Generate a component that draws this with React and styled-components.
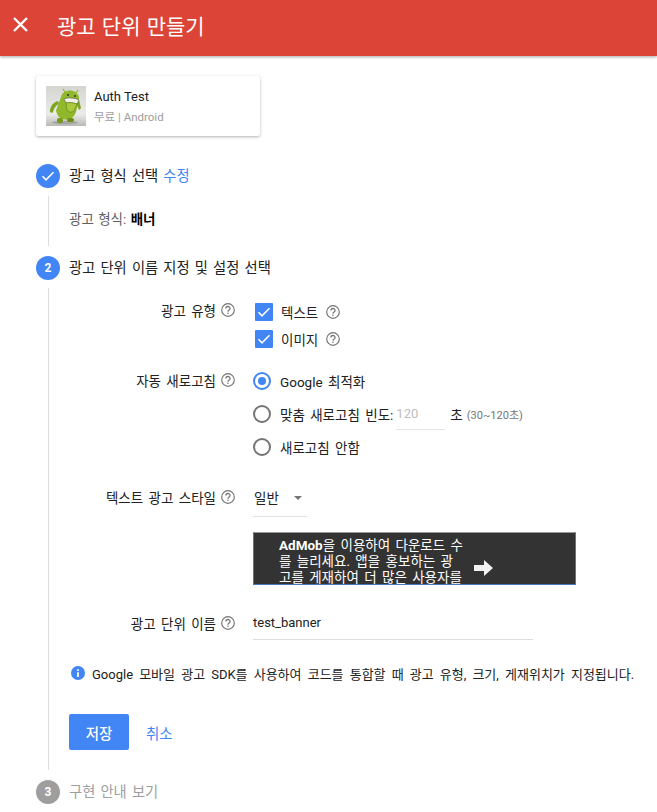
import React from "react";
import styled, { createGlobalStyle } from "styled-components";

const Global = createGlobalStyle`
  html, body { margin: 0; padding: 0; background: #fff; }
  body { font-family: Roboto, "Noto Sans CJK KR", sans-serif; color: #212121; width: 657px; height: 812px; overflow: hidden; }
  * { box-sizing: border-box; }
`;

const Page = styled.div`display: flex; flex-direction: column; width: 657px; height: 812px; overflow: hidden;`;
const Header = styled.header`
  height: 56px; background: #db4437; display: flex; align-items: center; padding-left: 12px; gap: 28px;
  box-shadow: 0 1px 3px rgba(0,0,0,.35); flex: none;
`;
const CloseIcon = styled.svg`width: 17px; height: 17px; margin-bottom: 8px; flex: none;`;
const Title = styled.h1`margin: 0; font-size: 21px; word-spacing: 1px; font-weight: 400; color: #fff; line-height: 24px; position: relative; top: -1px;`;
const Content = styled.main`padding: 20px 0 0 36px; display: flex; flex-direction: column; align-items: flex-start;`;

const AppCard = styled.div`
  width: 224px; height: 60px; background: #fff; border-radius: 2px; padding: 10px;
  box-shadow: 0 1px 3px rgba(0,0,0,.3); display: flex; gap: 8px; align-items: flex-start;
`;
const Thumb = styled.svg`width: 40px; height: 40px; display: block; flex: none;`;
const AppInfo = styled.div`display: flex; flex-direction: column; gap: 2px; padding-top: 1px;`;
const AppName = styled.div`font-size: 13px; line-height: 20px; color: #212121;`;
const AppMeta = styled.div`font-size: 11.5px; line-height: 16px; color: #9e9e9e;`;

const StepHead = styled.div`display: flex; align-items: center; gap: 9px; height: 24px; margin-top: ${p => p.$mt}px;`;
const Circle = styled.div`
  width: 24px; height: 24px; border-radius: 50%; background: ${p => p.$muted ? "#9e9e9e" : "#4285f4"}; color: #fff;
  display: flex; align-items: center; justify-content: center; font-size: 12px; font-weight: 700; flex: none;
`;
const StepTitle = styled.div`font-size: 14.3px; word-spacing: 1.6px; line-height: 24px; color: ${p => p.$muted ? "#9e9e9e" : "#212121"};`;
const EditLink = styled.span`color: #4285f4;`;

const Rail = styled.div`margin: ${p => p.$mt}px 0 0 12px; border-left: 1px solid #ddd; height: ${p => p.$h}px; padding-left: 20px; width: 610px;`;
const FormatLine = styled.div`font-size: 13.5px; word-spacing: 1px; line-height: 20px; padding-top: 13px; color: #616161;`;
const Strong = styled.strong`color: #000; font-weight: 700;`;

const Row = styled.div`display: grid; grid-template-columns: 166px 1fr; column-gap: 18px; margin-top: ${p => p.$mt || 0}px; align-items: start;`;
const LabelCell = styled.div`display: flex; justify-content: flex-end; align-items: center; gap: 5px; height: 20px; font-size: 13.5px; word-spacing: 2px; color: #212121; margin-top: ${p => p.$mt || 0}px;`;
const Help = styled.svg`width: 14px; height: 14px; flex: none; display: block;`;
const Stack = styled.div`display: flex; flex-direction: column; gap: ${p => p.$gap}px;`;
const OptRow = styled.div`display: flex; align-items: center; height: 20px; font-size: 13.5px; word-spacing: 2px; color: #212121; white-space: nowrap;`;
const Check = styled.span`width: 18px; height: 18px; background: #4285f4; border-radius: 1px; display: flex; align-items: center; justify-content: center; margin: 0 8px 0 2px; flex: none;`;
const Radio = styled.span`
  width: 18px; height: 18px; border-radius: 50%; border: 2px solid ${p => p.$on ? "#4285f4" : "#757575"}; margin-right: 9px; flex: none;
  display: flex; align-items: center; justify-content: center;
  &::after { content: ""; width: 8px; height: 8px; border-radius: 50%; background: ${p => p.$on ? "#4285f4" : "transparent"}; }
`;
const NumInput = styled.div`width: 49px; height: 26px; border-bottom: 1px solid #e5e5e5; color: #bdbdbd; font-size: 13px; line-height: 20px; margin: 0 5px 0 3px; align-self: flex-start; flex: none;`;
const Hint = styled.span`color: #757575; font-size: 11px; margin-left: 4px;`;
const OptHelp = styled(Help)`margin-left: 8px;`;

const Select = styled.div`width: 54px; height: 30px; border-bottom: 1px solid #e0e0e0; display: flex; align-items: flex-start; justify-content: space-between; padding: 1px 5px 0 1px; font-size: 13.5px; line-height: 20px; color: #212121;`;
const Caret = styled.span`width: 0; height: 0; border-left: 4px solid transparent; border-right: 4px solid transparent; border-top: 4px solid #757575; margin-top: 8px;`;

const Ad = styled.div`
  width: 323px; height: 53px; background: #333; border: 1px solid #4a76c0; border-top-color: #999; overflow: hidden;
  display: flex; align-items: center; padding-left: 25px; margin-top: 15px;
`;
const AdText = styled.div`width: 186px; height: 51px; overflow: hidden; color: #fff; font-size: 13.5px; word-spacing: 2px; line-height: 16px; padding-top: 4px; flex: none;`;
const AdBrand = styled.span`font-weight: 700;`;
const AdArrow = styled.svg`width: 19px; height: 16px; margin: 19px 0 0 9px; flex: none;`;

const TextInput = styled.div`width: 280px; height: 27px; border-bottom: 1px solid #ddd; font-size: 13px; line-height: 20px; color: #212121;`;

const Notice = styled.div`display: flex; align-items: center; gap: 7px; height: 20px; margin-top: 23px; padding-left: 2px; font-size: 13px; word-spacing: 2.9px; color: #212121; white-space: nowrap;`;
const InfoIcon = styled.svg`width: 14px; height: 14px; flex: none;`;

const Actions = styled.div`display: flex; align-items: center; gap: 17px; margin-top: 31px;`;
const Primary = styled.button`width: 60px; height: 36px; background: #4285f4; color: #fff; border: 0; border-radius: 2px; font: 500 14.5px Roboto, "Noto Sans CJK KR", sans-serif;`;
const TextBtn = styled.span`font-size: 14.5px; color: #4285f4;`;

const HelpIcon = ({ as: C = Help }) => (
  <C viewBox="0 0 24 24" aria-hidden="true">
    <circle cx="12" cy="12" r="10.8" fill="none" stroke="#757575" strokeWidth="2" />
    <path d="M8.4 9.600a3.600 3.600 0 0 1 7.200 0c0 2.600-3.600 2.600-3.600 5.400" fill="none" stroke="#757575" strokeWidth="2.200" />
    <rect x="10.900" y="16.500" width="2.200" height="2.200" fill="#757575" />
  </C>
);
const Tick = () => (
  <svg width="14" height="14" viewBox="0 0 14 14"><path d="M1.500 7.300 5 10.800 12.500 3.200" fill="none" stroke="#fff" strokeWidth="1.600" /></svg>
);

export default function App() {
  return (
    <Page>
      <Global />
      <Header>
        <CloseIcon viewBox="0 0 17 17"><path d="M2 2l13 13M15 2 2 15" stroke="#fff" strokeWidth="2.400" /></CloseIcon>
        <Title>광고 단위 만들기</Title>
      </Header>
      <Content>
        <AppCard>
          <Thumb viewBox="0 0 40 40" aria-hidden="true">
            <defs>
              <linearGradient id="bg" x1="0" y1="0" x2="0" y2="1"><stop offset="0" stopColor="#d4d4d1" /><stop offset=".7" stopColor="#ebebe9" /><stop offset="1" stopColor="#b9b9b5" /></linearGradient>
            </defs>
            <rect width="40" height="40" fill="url(#bg)" />
            <ellipse cx="19" cy="36.500" rx="13" ry="1.800" fill="#8f8f8b" opacity=".6" />
            <path d="M15 11c1-5 6-7 10-6.500s9 4 8 9l-2 8c-1 8-5 12-11 12-6 0-9-4-10-9z" fill="#8fb82a" />
            <path d="M19 6l-2-3M30 7l2-3" stroke="#8fb82a" strokeWidth="1.200" />
            <path d="M4 24c1-5 4-8 8-9l1 3c-3 1-5 4-6 8-1 2-4 0-3-2z" fill="#7ea620" />
            <path d="M33 14l2 8-2 2-3-7z" fill="#7ea620" />
            <rect x="11" y="32" width="6" height="5" rx="2" fill="#76981d" />
            <rect x="21" y="32" width="7" height="4" rx="2" fill="#6d8f18" />
            <path d="M18 13c4-2 12-1 15 1l-2 4c-3-1-8-2-11-1z" fill="#f1f1ea" stroke="#555" strokeWidth=".6" />
            <path d="M20 17c3-1 8 0 11 1l-3 7c-3 2-6 1-7-1z" fill="#aac93d" stroke="#5f7d18" strokeWidth=".6" />
            <circle cx="22" cy="9" r="1" fill="#333" /><circle cx="29" cy="10" r="1" fill="#333" />
          </Thumb>
          <AppInfo>
            <AppName>Auth Test</AppName>
            <AppMeta>무료 | Android</AppMeta>
          </AppInfo>
        </AppCard>

        <StepHead $mt={28}>
          <Circle><Tick /></Circle>
          <StepTitle>광고 형식 선택 <EditLink>수정</EditLink></StepTitle>
        </StepHead>
        <Rail $mt={8} $h={50}>
          <FormatLine>광고 형식: <Strong>배너</Strong></FormatLine>
        </Rail>

        <StepHead $mt={10}>
          <Circle>2</Circle>
          <StepTitle>광고 단위 이름 지정 및 설정 선택</StepTitle>
        </StepHead>
        <Rail $mt={8} $h={482}>
          <Row $mt={14}>
            <LabelCell $mt={-2}>광고 유형 <HelpIcon /></LabelCell>
            <Stack $gap={7}>
              <OptRow><Check><Tick /></Check>텍스트<HelpIcon as={OptHelp} /></OptRow>
              <OptRow><Check><Tick /></Check>이미지<HelpIcon as={OptHelp} /></OptRow>
            </Stack>
          </Row>
          <Row $mt={22}>
            <LabelCell $mt={-1}>자동 새로고침 <HelpIcon /></LabelCell>
            <Stack $gap={13}>
              <OptRow><Radio $on />Google 최적화</OptRow>
              <OptRow><Radio />맞춤 새로고침 빈도:<NumInput>120</NumInput>초<Hint>(30~120초)</Hint></OptRow>
              <OptRow><Radio />새로고침 안함</OptRow>
            </Stack>
          </Row>
          <Row $mt={30}>
            <LabelCell>텍스트 광고 스타일 <HelpIcon /></LabelCell>
            <Select>일반<Caret /></Select>
          </Row>
          <Row>
            <span />
            <Ad>
              <AdText><AdBrand>AdMob</AdBrand>을 이용하여 다운로드 수<br />를 늘리세요. 앱을 홍보하는 광<br />고를 게재하여 더 많은 사용자를</AdText>
              <AdArrow viewBox="0 0 19 16"><path d="M0 5h10V0l9 8-9 8v-5H0z" fill="#f2f2f2" /></AdArrow>
            </Ad>
          </Row>
          <Row $mt={28}>
            <LabelCell>광고 단위 이름 <HelpIcon /></LabelCell>
            <TextInput>test_banner</TextInput>
          </Row>
          <Notice>
            <InfoIcon viewBox="0 0 24 24"><circle cx="12" cy="12" r="12" fill="#4285f4" /><path d="M10.500 10.500h3V19h-3zM10.500 5.500h3v3h-3z" fill="#fff" /></InfoIcon>
            Google 모바일 광고 SDK를 사용하여 코드를 통합할 때 광고 유형, 크기, 게재위치가 지정됩니다.
          </Notice>
          <Actions>
            <Primary>저장</Primary>
            <TextBtn>취소</TextBtn>
          </Actions>
        </Rail>

        <StepHead $mt={10}>
          <Circle $muted>3</Circle>
          <StepTitle $muted>구현 안내 보기</StepTitle>
        </StepHead>
      </Content>
    </Page>
  );
}
